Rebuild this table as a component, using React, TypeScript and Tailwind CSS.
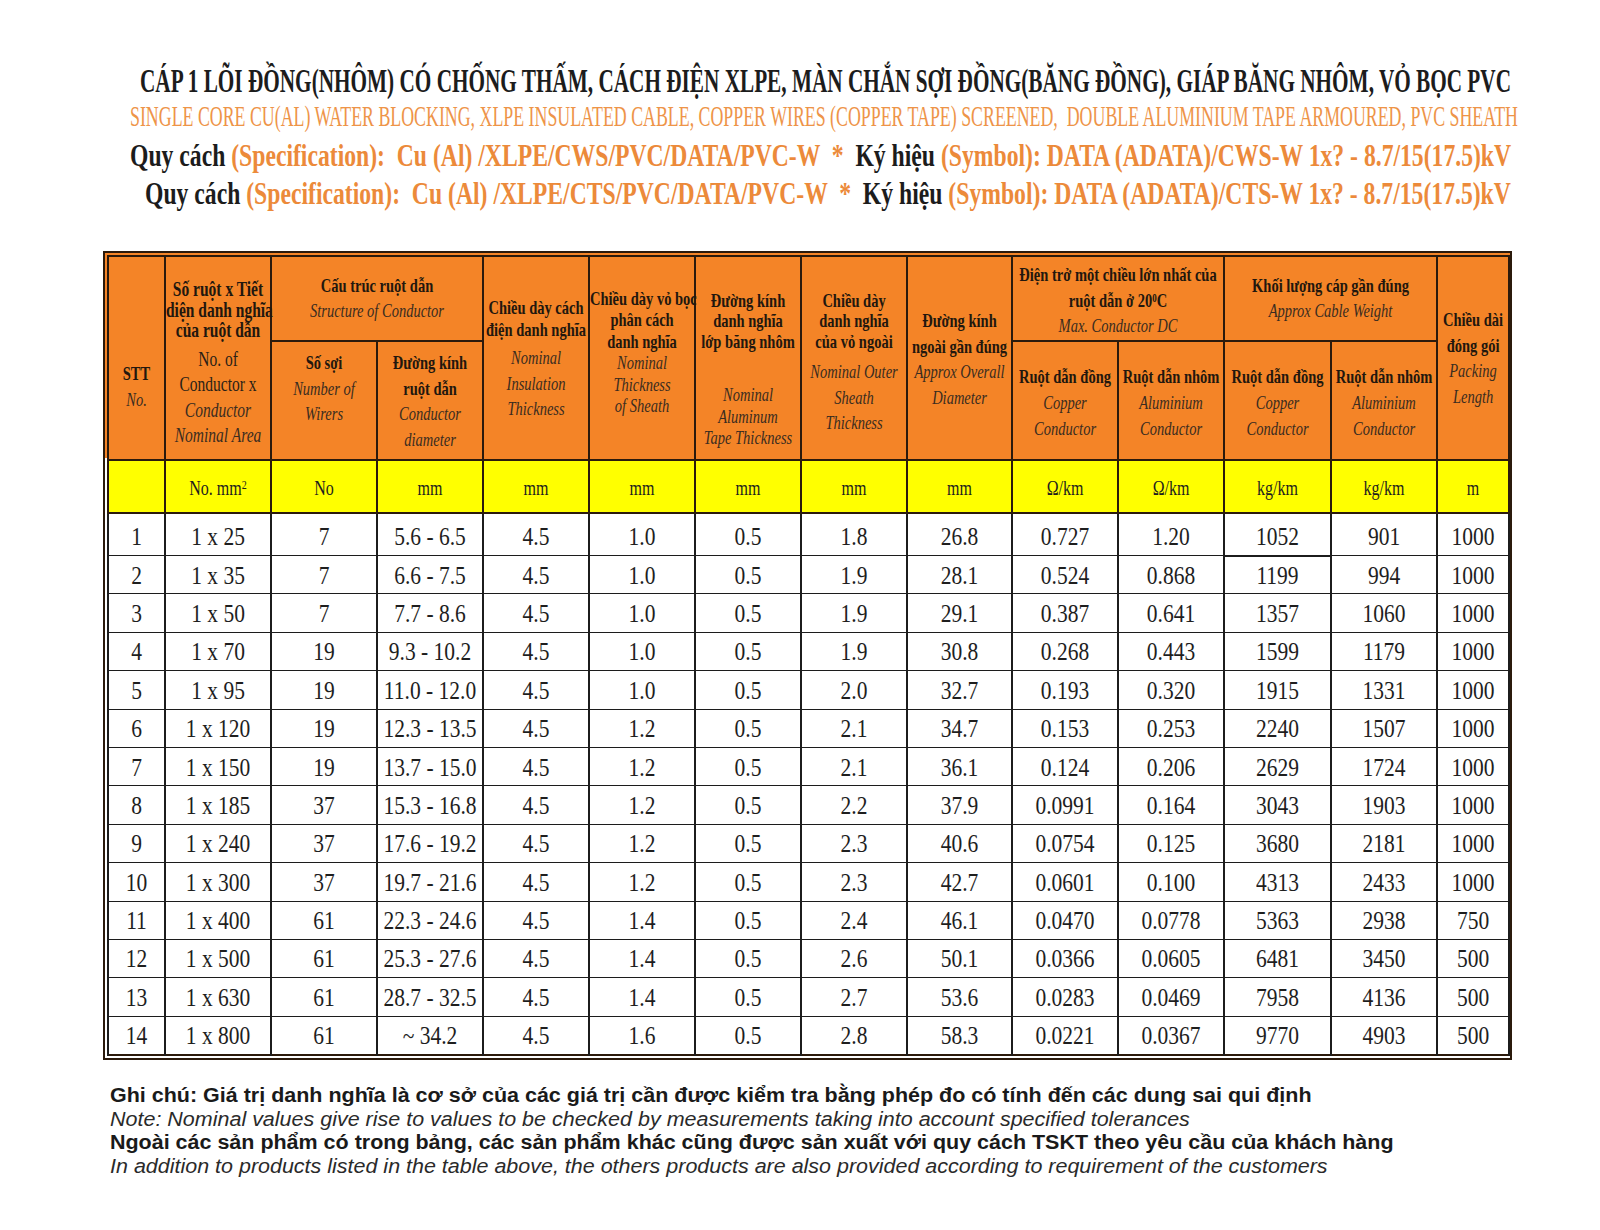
import { useLayoutEffect, useRef, useState, type ReactNode } from 'react';

// scales a single line of text horizontally so it lands on the width of the printed sheet
function Fit({ w, children, className = '' }: { w: number; children: ReactNode; className?: string }) {
  const ref = useRef<HTMLSpanElement>(null);
  const [sx, setSx] = useState(1);
  useLayoutEffect(() => {
    const fit = () => {
      const el = ref.current;
      if (el && el.offsetWidth) setSx(w / el.offsetWidth);
    };
    fit();
    document.fonts?.ready.then(fit);
  }, [w]);
  return (
    <span ref={ref} className={`inline-block origin-left whitespace-pre ${className}`} style={{ transform: `scaleX(${sx})` }}>
      {children}
    </span>
  );
}

// one line of header text, stretched tall like the source sheet
function Ln({ k, c, children }: { k: 'b' | 'i' | 'r'; c: string; children: ReactNode }) {
  const tone = k === 'b' ? 'font-bold text-[#22170e]' : k === 'i' ? 'italic text-[#3a2c20]' : 'text-[#2a1f16]';
  return (
    <div className={`whitespace-nowrap ${c} ${tone}`}>
      <span className="inline-block scale-y-[1.3]">{children}</span>
    </div>
  );
}

const rows: (string | number)[][] = [
  [1, '1 x 25', 7, '5.6 - 6.5', '4.5', '1.0', '0.5', '1.8', '26.8', '0.727', '1.20', '1052', '901', '1000'],
  [2, '1 x 35', 7, '6.6 - 7.5', '4.5', '1.0', '0.5', '1.9', '28.1', '0.524', '0.868', '1199', '994', '1000'],
  [3, '1 x 50', 7, '7.7 - 8.6', '4.5', '1.0', '0.5', '1.9', '29.1', '0.387', '0.641', '1357', '1060', '1000'],
  [4, '1 x 70', 19, '9.3 - 10.2', '4.5', '1.0', '0.5', '1.9', '30.8', '0.268', '0.443', '1599', '1179', '1000'],
  [5, '1 x 95', 19, '11.0 - 12.0', '4.5', '1.0', '0.5', '2.0', '32.7', '0.193', '0.320', '1915', '1331', '1000'],
  [6, '1 x 120', 19, '12.3 - 13.5', '4.5', '1.2', '0.5', '2.1', '34.7', '0.153', '0.253', '2240', '1507', '1000'],
  [7, '1 x 150', 19, '13.7 - 15.0', '4.5', '1.2', '0.5', '2.1', '36.1', '0.124', '0.206', '2629', '1724', '1000'],
  [8, '1 x 185', 37, '15.3 - 16.8', '4.5', '1.2', '0.5', '2.2', '37.9', '0.0991', '0.164', '3043', '1903', '1000'],
  [9, '1 x 240', 37, '17.6 - 19.2', '4.5', '1.2', '0.5', '2.3', '40.6', '0.0754', '0.125', '3680', '2181', '1000'],
  [10, '1 x 300', 37, '19.7 - 21.6', '4.5', '1.2', '0.5', '2.3', '42.7', '0.0601', '0.100', '4313', '2433', '1000'],
  [11, '1 x 400', 61, '22.3 - 24.6', '4.5', '1.4', '0.5', '2.4', '46.1', '0.0470', '0.0778', '5363', '2938', '750'],
  [12, '1 x 500', 61, '25.3 - 27.6', '4.5', '1.4', '0.5', '2.6', '50.1', '0.0366', '0.0605', '6481', '3450', '500'],
  [13, '1 x 630', 61, '28.7 - 32.5', '4.5', '1.4', '0.5', '2.7', '53.6', '0.0283', '0.0469', '7958', '4136', '500'],
  [14, '1 x 800', 61, '~ 34.2', '4.5', '1.6', '0.5', '2.8', '58.3', '0.0221', '0.0367', '9770', '4903', '500'],
];

const units = ['', 'No. mm', 'No', 'mm', 'mm', 'mm', 'mm', 'mm', 'mm', 'Ω/km', 'Ω/km', 'kg/km', 'kg/km', 'm'];
const colW = ['w-[57px]', 'w-[106px]', 'w-[106px]', 'w-[106px]', 'w-[106px]', 'w-[106px]', 'w-[106px]', 'w-[106px]', 'w-[105px]', 'w-[106px]', 'w-[106px]', 'w-[107px]', 'w-[106px]', 'w-[72px]'];

const hd = 'border-2 border-[#2b1a0c] bg-[#f48427] p-0 text-center align-top';
const orange = 'text-[#ec8a3a]';

export default function App() {
  return (
    <div className="h-[1230px] w-full overflow-hidden bg-white pt-[64px] font-['Liberation_Serif','Times_New_Roman',serif]">
      {/* titles */}
      <div className="h-[34px] pl-[140px] text-[33px] leading-[34px] font-bold text-[#1c1c1c]">
        <Fit w={1371}>CÁP 1 LÕI ĐỒNG(NHÔM) CÓ CHỐNG THẤM, CÁCH ĐIỆN XLPE, MÀN CHẮN SỢI ĐỒNG(BĂNG ĐỒNG), GIÁP BĂNG NHÔM, VỎ BỌC PVC</Fit>
      </div>
      <div className="mt-[1px] h-[34px] pl-[130px] text-[30px] leading-[34px] text-[#ee9448]">
        <Fit w={1388}>SINGLE CORE CU(AL) WATER BLOCKING, XLPE INSULATED CABLE, COPPER WIRES (COPPER TAPE) SCREENED,  DOUBLE ALUMINIUM TAPE ARMOURED, PVC SHEATH</Fit>
      </div>
      <div className="mt-[3px] h-[38px] pl-[130px] text-[32px] leading-[38px] font-bold text-[#1c1c1c]">
        <Fit w={1381}>
          Quy cách <span className={orange}>(Specification):  Cu (Al) /XLPE/CWS/PVC/DATA/PVC-W  *  </span>Ký hiệu <span className={orange}>(Symbol): DATA (ADATA)/CWS-W 1x? - 8.7/15(17.5)kV</span>
        </Fit>
      </div>
      <div className="h-[38px] pl-[145px] text-[32px] leading-[38px] font-bold text-[#1c1c1c]">
        <Fit w={1366}>
          Quy cách <span className={orange}>(Specification):  Cu (Al) /XLPE/CTS/PVC/DATA/PVC-W  *  </span>Ký hiệu <span className={orange}>(Symbol): DATA (ADATA)/CTS-W 1x? - 8.7/15(17.5)kV</span>
        </Fit>
      </div>

      {/* table with double frame */}
      <div className="ml-[103px] mt-[39px] w-[1409px] border-2 border-[#2b1a0c] bg-[linear-gradient(to_bottom,#f48427_205px,#ffffff_205px)] p-[2px]">
        <table className="w-[1401px] table-fixed border-collapse border-2 border-[#2b1a0c] text-[14.5px]">
          <colgroup>
            {colW.map((w, i) => <col key={i} className={w} />)}
          </colgroup>
          <tbody>
            <tr className="h-[85px]">
              <td rowSpan={2} className={hd}>
                <div className="pt-[103px]">
                  <Ln k="b" c="h-[26px] leading-[26px]">STT</Ln>
                  <Ln k="i" c="h-[26px] leading-[26px]">No.</Ln>
                </div>
              </td>
              <td rowSpan={2} className={hd}>
                <div className="pt-[23px]">
                  <Ln k="b" c="h-[20.5px] leading-[20.5px] text-[15.5px]">Số ruột x Tiết</Ln>
                  <Ln k="b" c="h-[20.5px] leading-[20.5px] text-[15.5px]">diện danh nghĩa</Ln>
                  <Ln k="b" c="h-[20.5px] leading-[20.5px] text-[15.5px]">của ruột dẫn</Ln>
                  <div className="mt-[4px]">
                    <Ln k="r" c="h-[25.5px] leading-[25.5px] text-[15.5px]">No. of</Ln>
                    <Ln k="r" c="h-[25.5px] leading-[25.5px] text-[15.5px]">Conductor x</Ln>
                    <Ln k="i" c="h-[25.5px] leading-[25.5px] text-[15.5px]">Conductor</Ln>
                    <Ln k="i" c="h-[25.5px] leading-[25.5px] text-[15.5px]">Nominal Area</Ln>
                  </div>
                </div>
              </td>
              <td colSpan={2} className={hd}>
                <div className="pt-[17px]">
                  <Ln k="b" c="h-[25px] leading-[25px]">Cấu trúc ruột dẫn</Ln>
                  <Ln k="i" c="h-[25px] leading-[25px]">Structure of Conductor</Ln>
                </div>
              </td>
              <td rowSpan={2} className={hd}>
                <div className="pt-[41px]">
                  <Ln k="b" c="h-[21.5px] leading-[21.5px]">Chiều dày cách</Ln>
                  <Ln k="b" c="h-[21.5px] leading-[21.5px]">điện danh nghĩa</Ln>
                  <div className="mt-[5px]">
                    <Ln k="i" c="h-[25.5px] leading-[25.5px]">Nominal</Ln>
                    <Ln k="i" c="h-[25.5px] leading-[25.5px]">Insulation</Ln>
                    <Ln k="i" c="h-[25.5px] leading-[25.5px]">Thickness</Ln>
                  </div>
                </div>
              </td>
              <td rowSpan={2} className={hd}>
                <div className="pt-[32px]">
                  <Ln k="b" c="h-[21.4px] leading-[21.4px]">Chiều dày vỏ bọc</Ln>
                  <Ln k="b" c="h-[21.4px] leading-[21.4px]">phân cách</Ln>
                  <Ln k="b" c="h-[21.4px] leading-[21.4px]">danh nghĩa</Ln>
                  <Ln k="i" c="h-[21.4px] leading-[21.4px]">Nominal</Ln>
                  <Ln k="i" c="h-[21.4px] leading-[21.4px]">Thickness</Ln>
                  <Ln k="i" c="h-[21.4px] leading-[21.4px]">of Sheath</Ln>
                </div>
              </td>
              <td rowSpan={2} className={hd}>
                <div className="pt-[34px]">
                  <Ln k="b" c="h-[20.4px] leading-[20.4px]">Đường kính</Ln>
                  <Ln k="b" c="h-[20.4px] leading-[20.4px]">danh nghĩa</Ln>
                  <Ln k="b" c="h-[20.4px] leading-[20.4px]">lớp băng nhôm</Ln>
                  <div className="mt-[33px]">
                    <Ln k="i" c="h-[21.4px] leading-[21.4px]">Nominal</Ln>
                    <Ln k="i" c="h-[21.4px] leading-[21.4px]">Aluminum</Ln>
                    <Ln k="i" c="h-[21.4px] leading-[21.4px]">Tape Thickness</Ln>
                  </div>
                </div>
              </td>
              <td rowSpan={2} className={hd}>
                <div className="pt-[34px]">
                  <Ln k="b" c="h-[20.4px] leading-[20.4px]">Chiều dày</Ln>
                  <Ln k="b" c="h-[20.4px] leading-[20.4px]">danh nghĩa</Ln>
                  <Ln k="b" c="h-[20.4px] leading-[20.4px]">của vỏ ngoài</Ln>
                  <div className="mt-[8px]">
                    <Ln k="i" c="h-[25.5px] leading-[25.5px]">Nominal Outer</Ln>
                    <Ln k="i" c="h-[25.5px] leading-[25.5px]">Sheath</Ln>
                    <Ln k="i" c="h-[25.5px] leading-[25.5px]">Thickness</Ln>
                  </div>
                </div>
              </td>
              <td rowSpan={2} className={hd}>
                <div className="pt-[52px]">
                  <Ln k="b" c="h-[25.5px] leading-[25.5px]">Đường kính</Ln>
                  <Ln k="b" c="h-[25.5px] leading-[25.5px]">ngoài gần đúng</Ln>
                  <Ln k="i" c="h-[25.5px] leading-[25.5px]">Approx Overall</Ln>
                  <Ln k="i" c="h-[25.5px] leading-[25.5px]">Diameter</Ln>
                </div>
              </td>
              <td colSpan={2} className={hd}>
                <div className="pt-[6px]">
                  <Ln k="b" c="h-[25.5px] leading-[25.5px]">Điện trở một chiều lớn nhất của</Ln>
                  <Ln k="b" c="h-[25.5px] leading-[25.5px]">
                    ruột dẫn ở 20<sup className="text-[9px]">0</sup>C
                  </Ln>
                  <Ln k="i" c="h-[25.5px] leading-[25.5px]">Max. Conductor DC</Ln>
                </div>
              </td>
              <td colSpan={2} className={hd}>
                <div className="pt-[17px]">
                  <Ln k="b" c="h-[25px] leading-[25px]">Khối lượng cáp gần đúng</Ln>
                  <Ln k="i" c="h-[25px] leading-[25px]">Approx Cable Weight</Ln>
                </div>
              </td>
              <td rowSpan={2} className={hd}>
                <div className="pt-[51px]">
                  <Ln k="b" c="h-[25.5px] leading-[25.5px]">Chiều dài</Ln>
                  <Ln k="b" c="h-[25.5px] leading-[25.5px]">đóng gói</Ln>
                  <Ln k="i" c="h-[25.5px] leading-[25.5px]">Packing</Ln>
                  <Ln k="i" c="h-[25.5px] leading-[25.5px]">Length</Ln>
                </div>
              </td>
            </tr>
            <tr className="h-[119px]">
              <td className={hd}>
                <div className="pt-[9px]">
                  <Ln k="b" c="h-[25.5px] leading-[25.5px]">Số sợi</Ln>
                  <Ln k="i" c="h-[25.5px] leading-[25.5px]">Number of</Ln>
                  <Ln k="i" c="h-[25.5px] leading-[25.5px]">Wirers</Ln>
                </div>
              </td>
              <td className={hd}>
                <div className="pt-[9px]">
                  <Ln k="b" c="h-[25.5px] leading-[25.5px]">Đường kính</Ln>
                  <Ln k="b" c="h-[25.5px] leading-[25.5px]">ruột dẫn</Ln>
                  <Ln k="i" c="h-[25.5px] leading-[25.5px]">Conductor</Ln>
                  <Ln k="i" c="h-[25.5px] leading-[25.5px]">diameter</Ln>
                </div>
              </td>
              {['đồng', 'nhôm', 'đồng', 'nhôm'].map((m, i) => (
                <td key={i} className={hd}>
                  <div className="pt-[21px]">
                    <Ln k="b" c="h-[26px] leading-[26px]">Ruột dẫn {m}</Ln>
                    <Ln k="i" c="h-[26px] leading-[26px]">{m === 'đồng' ? 'Copper' : 'Aluminium'}</Ln>
                    <Ln k="i" c="h-[26px] leading-[26px]">Conductor</Ln>
                  </div>
                </td>
              ))}
            </tr>
            <tr className="h-[53px]">
              {units.map((u, i) => (
                <td key={i} className="border-2 border-[#2b1a0c] bg-[#ffff00] p-0 pt-[5px] text-center align-middle text-[16px] text-[#1e1e1e]">
                  <span className="inline-block scale-y-[1.25]">
                    {u}
                    {i === 1 && <sup className="text-[10px]">2</sup>}
                  </span>
                </td>
              ))}
            </tr>
            {rows.map((r) => (
              <tr key={r[0]} className={r[0] === 1 ? 'h-[42.5px]' : 'h-[38.4px]'}>
                {r.map((v, j) => (
                  <td
                    key={j}
                    className={`border-x-2 border-y border-[#1c1c1c] p-0 text-center align-middle text-[21.5px] text-[#1e1e1e] ${r[0] === 1 ? 'pt-[5px]' : 'pt-[2px]'} ${r[0] === 1 && j === 11 ? 'border-b-2' : ''}`}
                  >
                    <span className="inline-block scale-y-[1.2]">{v}</span>
                  </td>
                ))}
              </tr>
            ))}
          </tbody>
        </table>
      </div>

      {/* notes */}
      <div className="mt-[23px] pl-[110px] font-['Liberation_Sans','Arial',sans-serif] text-[19.5px] leading-[24px]">
        <div className="h-[24px] font-bold text-[#1a1a1a]">
          <Fit w={1201}>Ghi chú: Giá trị danh nghĩa là cơ sở của các giá trị cần được kiểm tra bằng phép đo có tính đến các dung sai qui định</Fit>
        </div>
        <div className="h-[23.5px] italic text-[#2a2a2a]">
          <Fit w={1080}>Note: Nominal values give rise to values to be checked by measurements taking into account specified tolerances</Fit>
        </div>
        <div className="h-[23.5px] font-bold text-[#1a1a1a]">
          <Fit w={1284}>Ngoài các sản phẩm có trong bảng, các sản phẩm khác cũng được sản xuất với quy cách TSKT theo yêu cầu của khách hàng</Fit>
        </div>
        <div className="h-[24px] italic text-[#2a2a2a]">
          <Fit w={1218}>In addition to products listed in the table above, the others products are also provided according to requirement of the customers</Fit>
        </div>
      </div>
    </div>
  );
}
